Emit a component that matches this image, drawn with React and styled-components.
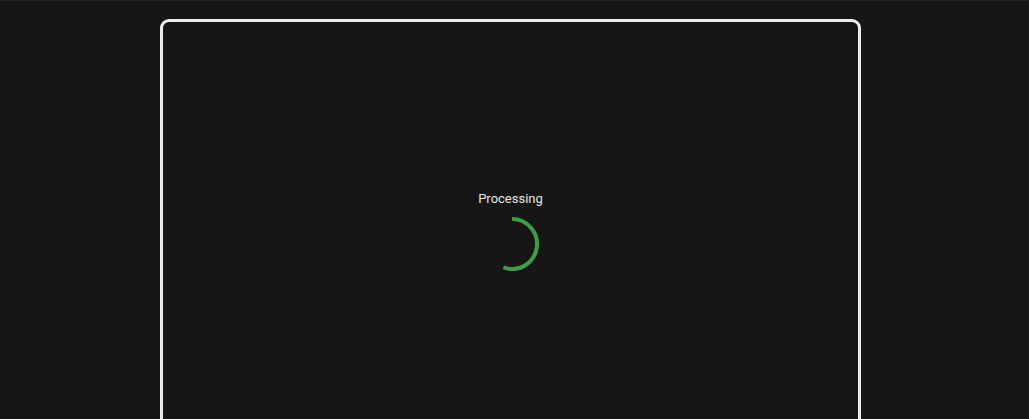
import React from 'react';
import styled, { createGlobalStyle } from 'styled-components';

const GlobalStyle = createGlobalStyle`
  html, body {
    margin: 0;
    padding: 0;
    background: #161616;
    font-family: Roboto, "Liberation Sans", sans-serif;
    overflow: hidden;
  }
`;

const Page = styled.div`
  height: 419px;
  overflow: hidden;
  border-top: 1px solid #262626;
  box-sizing: border-box;
  display: flex;
  padding: 18px 0 0 160px;
`;

const Frame = styled.div`
  flex: 0 0 701px;
  height: 440px;
  box-sizing: border-box;
  border: 3px solid #ececec;
  border-radius: 9px;
  display: flex;
  flex-direction: column;
  align-items: center;
  padding-top: 169px;
`;

const Label = styled.div`
  color: #e6e6e6;
  font-size: 13px;
  line-height: 16px;
`;

const Spinner = styled.svg`
  margin-top: 9px;
  margin-left: 2px;
  width: 56px;
  height: 56px;
`;

function App() {
  // arc: from 12 o'clock clockwise to roughly 7 o'clock
  const r = 25;
  const c = 28;
  const end = (200 * Math.PI) / 180;
  const ex = c + r * Math.sin(end);
  const ey = c - r * Math.cos(end);
  return (
    <>
      <GlobalStyle />
      <Page>
        <Frame>
          <Label>Processing</Label>
          <Spinner viewBox="0 0 56 56">
            <path
              d={`M ${c} ${c - r} A ${r} ${r} 0 1 1 ${ex} ${ey}`}
              fill="none"
              stroke="#3f9c47"
              strokeWidth="4"
            />
          </Spinner>
        </Frame>
      </Page>
    </>
  );
}

export default App;
